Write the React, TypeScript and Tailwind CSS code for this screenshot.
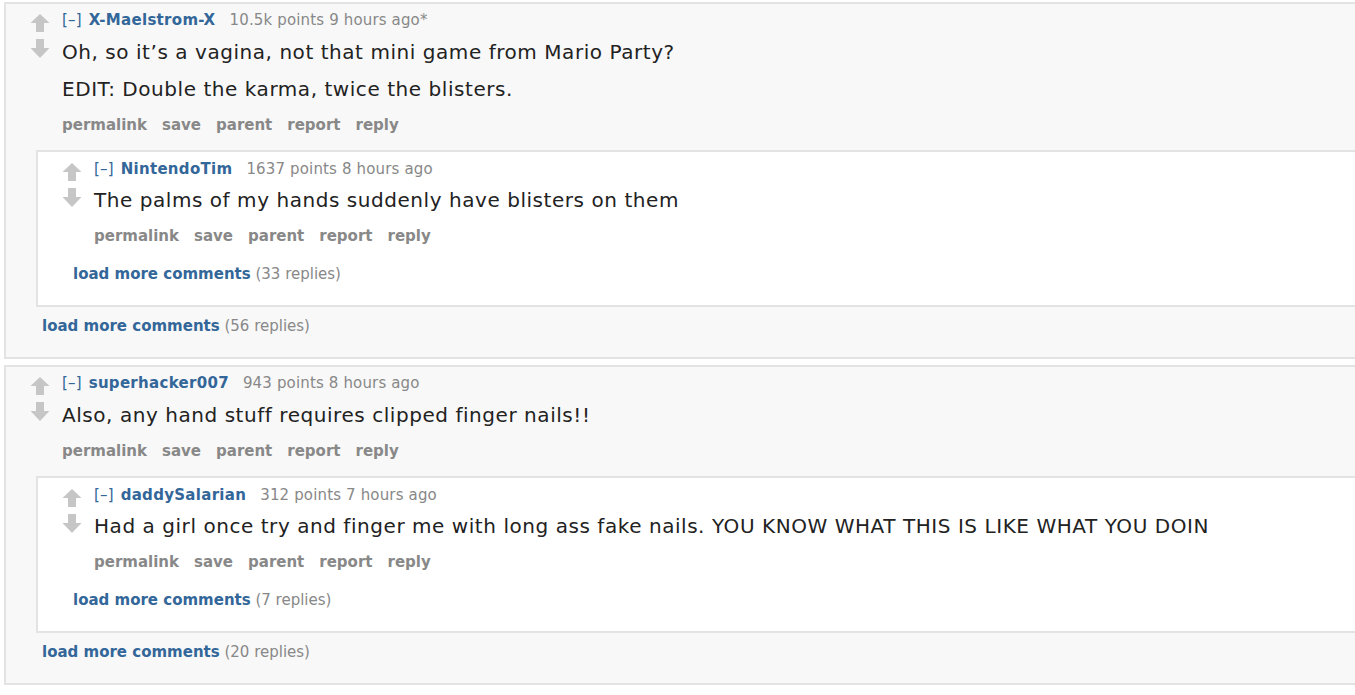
import React from "react";

const font = { fontFamily: '"DejaVu Sans", Verdana, sans-serif' };

function Arrows() {
  return (
    <div className="flex flex-col items-center w-[20px] shrink-0 pt-[4px]">
      <svg width="20" height="18" viewBox="0 0 20 18">
        <path d="M10 0 L19.5 9 L14 9 L14 18 L6 18 L6 9 L0.5 9 Z" fill="#c6c6c6" />
      </svg>
      <svg width="20" height="19" viewBox="0 0 20 19" className="mt-[7px]">
        <path d="M6 0 L14 0 L14 9 L19.5 9 L10 19 L0.5 9 L6 9 Z" fill="#c6c6c6" />
      </svg>
    </div>
  );
}

function Tagline({ author, meta }: { author: string; meta: string }) {
  return (
    <div className="h-[20px] leading-[20px] text-[15px] tracking-[0.15px] whitespace-nowrap">
      <span className="text-[#369]">[–]</span>
      <span className="text-[#369] font-bold ml-[7px] tracking-[0.3px]">{author}</span>
      <span className="text-[#888] ml-[14px]">{meta}</span>
    </div>
  );
}

function Buttons() {
  return (
    <div className="flex gap-[15px] h-[20px] leading-[20px] text-[15px] font-bold text-[#888]">
      <span>permalink</span>
      <span>save</span>
      <span>parent</span>
      <span>report</span>
      <span>reply</span>
    </div>
  );
}

function LoadMore({ n }: { n: number }) {
  return (
    <div className="h-[20px] leading-[20px] text-[15px] whitespace-nowrap">
      <span className="text-[#369] font-bold">load more comments</span>
      <span className="text-[#888]"> ({n} replies)</span>
    </div>
  );
}

function Body({ paras, top }: { paras: string[]; top: string }) {
  return (
    <div className={"flex flex-col gap-[11px] " + top}>
      {paras.map((p, i) => (
        <div
          key={i}
          className="h-[26px] leading-[26px] text-[20px] tracking-[0.55px] text-[#222] whitespace-nowrap"
        >
          {p}
        </div>
      ))}
    </div>
  );
}

function Thread({
  author,
  meta,
  paras,
  child,
  outerReplies,
}: {
  author: string;
  meta: string;
  paras: string[];
  child: { author: string; meta: string; text: string; replies: number };
  outerReplies: number;
}) {
  return (
    <div className="ml-[4px] border-2 border-r-0 border-[#e3e3e3] bg-[#f8f8f8] pt-[6px] pb-[21px]">
      <div className="flex pl-[24px]">
        <Arrows />
        <div className="ml-[12px] flex-1 min-w-0">
          <Tagline author={author} meta={meta} />
          <Body paras={paras} top="mt-[9px]" />
          <div className="mt-[13px]">
            <Buttons />
          </div>
        </div>
      </div>
      <div className="ml-[30px] mt-[15px] border-2 border-r-0 border-[#e3e3e3] bg-white pt-[7px] pb-[21px]">
        <div className="flex pl-[24px]">
          <Arrows />
          <div className="ml-[12px] flex-1 min-w-0">
            <Tagline author={child.author} meta={child.meta} />
            <Body paras={[child.text]} top="mt-[8px]" />
            <div className="mt-[13px]">
              <Buttons />
            </div>
          </div>
        </div>
        <div className="ml-[35px] mt-[18px]">
          <LoadMore n={child.replies} />
        </div>
      </div>
      <div className="ml-[36px] mt-[9px]">
        <LoadMore n={outerReplies} />
      </div>
    </div>
  );
}

export default function App() {
  return (
    <div className="w-[1355px] h-[695px] bg-white overflow-hidden pt-[2px]" style={font}>
      <Thread
        author="X-Maelstrom-X"
        meta="10.5k points 9 hours ago*"
        paras={[
          "Oh, so it’s a vagina, not that mini game from Mario Party?",
          "EDIT: Double the karma, twice the blisters.",
        ]}
        child={{
          author: "NintendoTim",
          meta: "1637 points 8 hours ago",
          text: "The palms of my hands suddenly have blisters on them",
          replies: 33,
        }}
        outerReplies={56}
      />
      <div className="h-[6px]" />
      <Thread
        author="superhacker007"
        meta="943 points 8 hours ago"
        paras={["Also, any hand stuff requires clipped finger nails!!"]}
        child={{
          author: "daddySalarian",
          meta: "312 points 7 hours ago",
          text: "Had a girl once try and finger me with long ass fake nails. YOU KNOW WHAT THIS IS LIKE WHAT YOU DOIN",
          replies: 7,
        }}
        outerReplies={20}
      />
    </div>
  );
}
